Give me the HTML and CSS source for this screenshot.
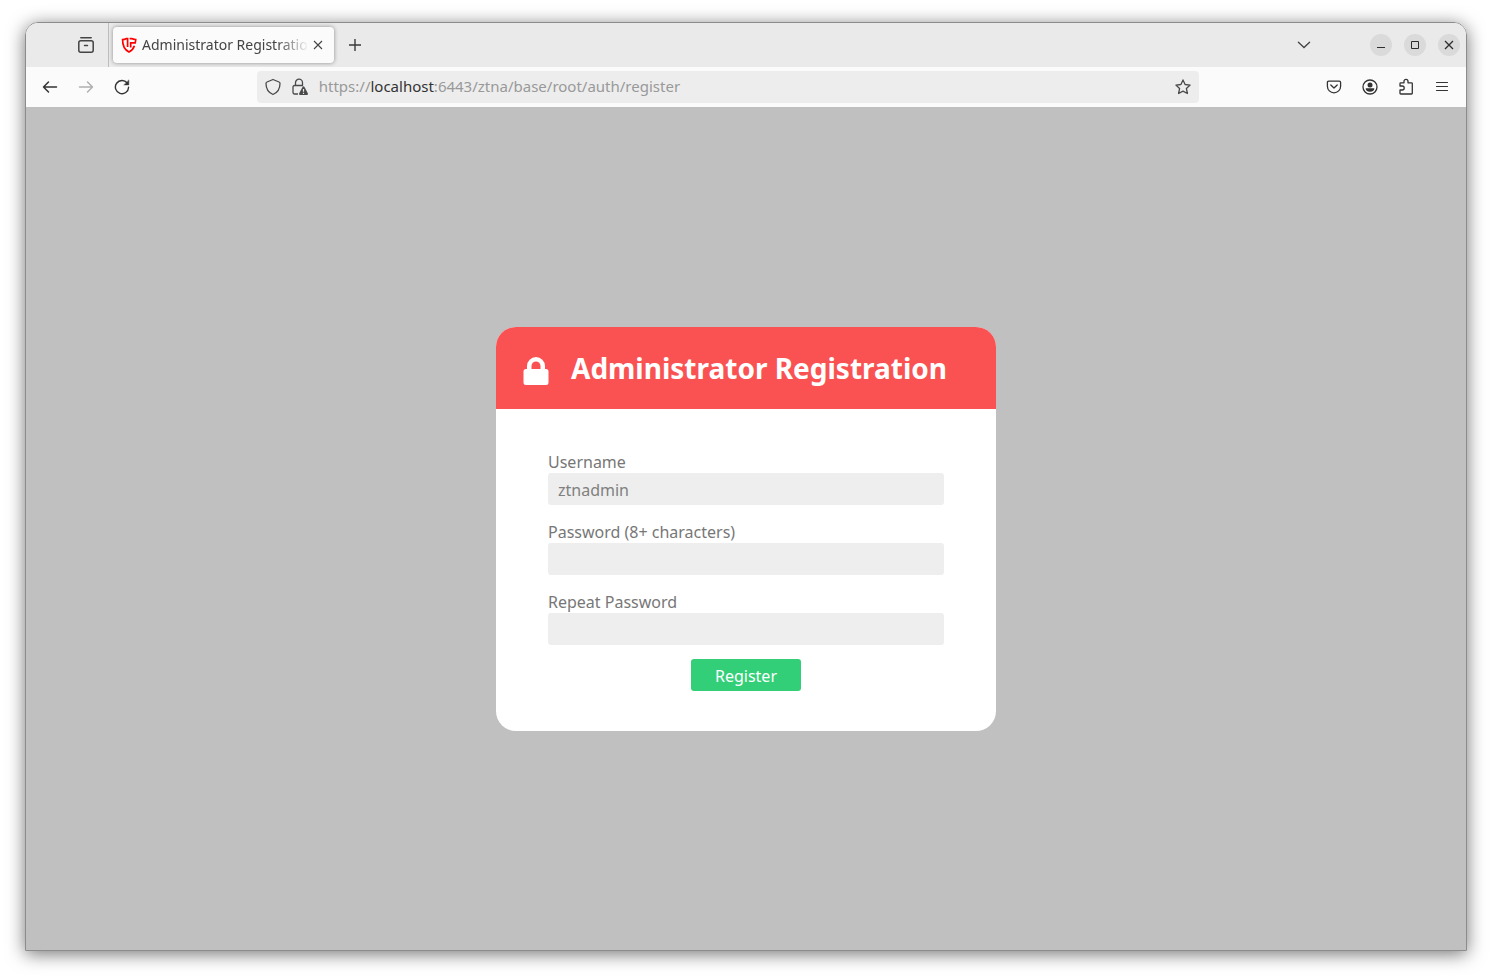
FILE: index.html
```html
<!DOCTYPE html>
<html lang="en">
<head>
  <meta charset="UTF-8" />
  <meta name="viewport" content="width=device-width, initial-scale=1.0" />
  <title>Administrator Registration</title>
  <link rel="stylesheet" href="styles.css">
</head>
<body>
  <div class="window">
    <div class="tab-bar">
      <button type="button" class="icon-btn recent" aria-label="Recent tabs">
        <svg width="18" height="18" viewBox="0 0 18 18" fill="none" stroke="#444" stroke-width="1.5" stroke-linecap="round">
          <path d="M3.8 1.8h10.4" />
          <rect x="1.8" y="4.8" width="14.4" height="11.4" rx="2" />
          <path d="M7.5 9.5h3" />
        </svg>
      </button>
      <div class="tab">
        <svg class="favicon" width="16" height="16" viewBox="0 0 16 16" fill="none" stroke="#f00" stroke-width="1.7">
          <path d="M6.6 10V1.7H5Q3.500 2.500 1.600 2.500C1.500 8 3 12.500 8 15c3-1.500 4.600-3.500 5.400-6.200" />
          <path d="M8.600 1.600h1.800q1.900.9 4.300.9-.1 1.900-.5 3.300H9.700v4.700" />
        </svg>
        <span class="tab-title">Administrator Registration</span>
        <button type="button" class="tab-close" aria-label="Close tab">
          <svg width="10" height="10" viewBox="0 0 10 10" stroke="#444" stroke-width="1.1"><path d="M1 1l8 8M9 1L1 9" /></svg>
        </button>
      </div>
      <button type="button" class="icon-btn" aria-label="New tab">
        <svg width="14" height="14" viewBox="0 0 14 14" stroke="#3a3a3a" stroke-width="1.4"><path d="M7 1v12M1 7h12" /></svg>
      </button>
      <div class="controls">
        <button type="button" class="icon-btn all-tabs" aria-label="List all tabs">
          <svg width="14" height="8" viewBox="0 0 14 8" fill="none" stroke="#444" stroke-width="1.3" stroke-linecap="round"><path d="M1.4 1.2L7 6.5l5.600-5.300" /></svg>
        </button>
        <button type="button" class="round-btn" aria-label="Minimize">
          <svg width="10" height="10" viewBox="0 0 10 10"><path d="M1 7h8v1H1z" fill="#2e2e2e" /></svg>
        </button>
        <button type="button" class="round-btn" aria-label="Maximize">
          <svg width="10" height="10" viewBox="0 0 10 10"><path d="M1.5 1.5h7v7h-7z" fill="none" stroke="#2e2e2e" /></svg>
        </button>
        <button type="button" class="round-btn" aria-label="Close">
          <svg width="10" height="10" viewBox="0 0 10 10"><path d="M1 1l8 8M9 1L1 9" stroke="#2e2e2e" stroke-width="1.3" /></svg>
        </button>
      </div>
    </div>

    <div class="toolbar">
      <button type="button" class="icon-btn" aria-label="Back">
        <svg width="16" height="16" viewBox="0 0 16 16" fill="none" stroke="#333" stroke-width="1.5" stroke-linecap="round" stroke-linejoin="round"><path d="M14.500 8h-13M6.500 3l-5 5 5 5" /></svg>
      </button>
      <button type="button" class="icon-btn" aria-label="Forward" disabled>
        <svg width="16" height="16" viewBox="0 0 16 16" fill="none" stroke="#b0b0b0" stroke-width="1.5" stroke-linecap="round" stroke-linejoin="round"><path d="M1.500 8h13M9.500 3l5 5-5 5" /></svg>
      </button>
      <button type="button" class="icon-btn" aria-label="Reload">
        <svg width="16" height="16" viewBox="0 0 16 16" fill="none" stroke="#333" stroke-width="1.4" stroke-linecap="round">
          <path d="M13.200 4A6.600 6.600 0 1 0 14.600 8.300" />
          <path d="M14.800 1.300v4.600h-4.600z" fill="#333" stroke-width=".5" />
        </svg>
      </button>
      <div class="spring"></div>
      <div class="url-bar">
        <svg width="16" height="18" viewBox="0 0 16 18" fill="none" stroke="#4a4a4a" stroke-width="1.3" stroke-linejoin="round">
          <path d="M8 1.500L14 4q1 .4 1 1.500c0 5-2.200 9-7 11-4.800-2-7-6-7-11Q1 4.400 2 4z" />
        </svg>
        <svg width="16" height="18" viewBox="0 0 16 18">
          <path d="M3.500 7.500V4.700a3.500 3.500 0 0 1 7 0v2.800M6 16H2.500A1.500 1.500 0 0 1 1 14.500V9a1.500 1.500 0 0 1 1.500-1.500h8.500" fill="none" stroke="#4a4a4a" stroke-width="1.3" />
          <path d="M11.500 8.300q.6 0 1 .7l3.300 6.300q.5 1.500-.8 1.700H8q-1.300-.2-.8-1.700L10.500 9q.4-.7 1-.7z" fill="#4a4a4a" />
          <path d="M11.500 11v2.800M11.500 14.800v1.200" stroke="#ededed" stroke-width="1.2" />
        </svg>
        <div class="url" role="textbox" aria-label="Address" contenteditable="true" spellcheck="false">https://<span class="host">localhost</span>:6443/ztna/base/root/auth/register</div>
        <button type="button" class="star" aria-label="Bookmark this page">
          <svg width="16" height="16" viewBox="0 0 16 16" fill="none" stroke="#4a4a4a" stroke-width="1.3" stroke-linejoin="round">
            <path d="M8 .9l2.100 4.600 5 .6-3.700 3.400 1 5L8 12.100l-4.400 2.400 1-5L.9 6.100l5-.6z" />
          </svg>
        </button>
      </div>
      <div class="spring"></div>
      <button type="button" class="icon-btn" aria-label="Save to Pocket">
        <svg width="16" height="16" viewBox="0 0 16 16" fill="none" stroke="#333" stroke-width="1.3" stroke-linecap="round" stroke-linejoin="round">
          <path d="M2.700 2.200h10.600q1.300 0 1.300 1.300v3.700a6.600 6.600 0 0 1-13.200 0V3.500q0-1.300 1.300-1.300z" />
          <path d="M4.800 6L8 9l3.200-3" />
        </svg>
      </button>
      <button type="button" class="icon-btn" aria-label="Account">
        <svg width="16" height="16" viewBox="0 0 16 16">
          <circle cx="8" cy="8" r="7" fill="none" stroke="#333" stroke-width="1.3" />
          <circle cx="8" cy="6" r="2.500" fill="#333" />
          <path d="M3.700 9.300h8.600q.1 3.400-4.300 3.400t-4.300-3.400z" fill="#333" />
        </svg>
      </button>
      <button type="button" class="icon-btn" aria-label="Extensions">
        <svg width="16" height="18" viewBox="0 0 16 18" fill="none" stroke="#333" stroke-width="1.3" stroke-linejoin="round">
          <path d="M2 8V5.600q0-.8.800-.8H6V3.300a2 2 0 0 1 4 0v1.500h3.500q.8 0 .8.800v9.600q0 .8-.8.800H2.800q-.8 0-.8-.8V12h2.200a2 2 0 0 0 0-4z" />
        </svg>
      </button>
      <button type="button" class="icon-btn" aria-label="Menu">
        <svg width="14" height="12" viewBox="0 0 14 12" stroke="#333" stroke-width="1.2" stroke-linecap="round"><path d="M1.500 1.500h11M1.500 5.500h11M1.500 9.500h11" /></svg>
      </button>
    </div>

    <main class="page">
      <div class="card">
        <div class="card-header">
          <svg width="26" height="28" viewBox="0 0 26 28" fill="#fff">
            <path d="M4 12V9a9 9 0 0 1 18 0v3h1a2.500 2.500 0 0 1 2.500 2.500v11A2.500 2.500 0 0 1 23 28H3A2.500 2.500 0 0 1 .5 25.500v-11A2.500 2.500 0 0 1 3 12zm4.500 0h9V9a4.500 4.500 0 0 0-9 0z" />
          </svg>
          <h1>Administrator Registration</h1>
        </div>
        <form id="regForm">
          <label for="username">Username</label>
          <input type="text" id="username" placeholder="ztnadmin" />
          <label for="password">Password (8+ characters)</label>
          <input type="password" id="password" />
          <label for="repeatPassword">Repeat Password</label>
          <input type="password" id="repeatPassword" />
          <button type="submit" class="register">Register</button>
        </form>
      </div>
    </main>
  </div>
</body>
</html>
```

FILE: styles.css
```css
* {
  box-sizing: border-box;
}

body {
  margin: 0;
  padding: 22px 25px 28px;
  min-height: 100vh;
  display: flex;
  background-color: white;
  font-family: 'Noto Sans', sans-serif;
  font-size: 16px;
}

button {
  display: flex;
  align-items: center;
  justify-content: center;
  padding: 0;
  border: none;
  background: none;
  font-family: inherit;
  cursor: pointer;
}

svg {
  flex-shrink: 0;
}

/* Browser window */
.window {
  flex: 1;
  display: flex;
  flex-direction: column;
  min-width: 0;
  border: 1px solid #8c8c8c;
  border-radius: 13px 13px 0 0;
  overflow: hidden;
  box-shadow: 0 3px 18px rgba(0, 0, 0, 0.55);
}

.tab-bar {
  display: flex;
  align-items: center;
  height: 44px;
  background-color: #eaeaea;
}

.icon-btn {
  width: 36px;
  height: 36px;
  flex-shrink: 0;
}

.recent {
  width: 83px;
  height: 44px;
  padding-left: 38px;
  border-right: 1px solid #bdbdbd;
}

.tab {
  display: flex;
  align-items: center;
  width: 221px;
  height: 36px;
  margin: 0 3px 0 4px;
  padding: 0 7px 0 8px;
  border-radius: 4px;
  background-color: #fbfbfb;
  box-shadow: 0 0 4px rgba(0, 0, 0, 0.4);
}

.tab-title {
  flex: 1;
  min-width: 0;
  margin-left: 5px;
  padding-bottom: 2px;
  overflow: hidden;
  white-space: nowrap;
  font-size: 14px;
  color: #444;
  mask-image: linear-gradient(to left, transparent, black 32px);
}

.tab-close {
  width: 18px;
  height: 20px;
}

.controls {
  display: flex;
  align-items: center;
  gap: 12px;
  margin-left: auto;
  padding-right: 6px;
}

.all-tabs {
  margin-right: 36px;
}

.round-btn {
  width: 22px;
  height: 22px;
  border-radius: 50%;
  background-color: #dadada;
}

.toolbar {
  display: flex;
  align-items: center;
  height: 40px;
  padding: 0 6px;
  background-color: #fbfbfb;
}

.spring {
  flex: 1;
}

.url-bar {
  display: flex;
  align-items: center;
  gap: 11px;
  width: 66%;
  height: 32px;
  padding: 0 8px;
  border-radius: 4px;
  background-color: #ededed;
}

.url {
  flex: 1;
  min-width: 0;
  padding-bottom: 2px;
  overflow: hidden;
  white-space: nowrap;
  font-size: 15px;
  color: #999;
  outline: none;
}

.host {
  color: #333;
}

/* Registration page */
.page {
  flex: 1;
  display: flex;
  justify-content: center;
  align-items: center;
  background-color: #c0c0c0;
}

.card {
  width: 100%;
  max-width: 500px;
  border-radius: 20px;
  overflow: hidden;
  background-color: white;
}

.card-header {
  display: flex;
  align-items: center;
  gap: 22px;
  padding: 22px 27px;
  background-color: #fa5252;
  color: white;
}

.card-header svg {
  margin-top: 6px;
}

h1 {
  margin: 0;
  font-size: 28px;
  line-height: 38px;
}

form {
  display: flex;
  flex-direction: column;
  padding: 42px 52px 40px;
}

label {
  line-height: 22px;
  color: #777;
}

input {
  width: 100%;
  height: 32px;
  margin-bottom: 16px;
  padding: 2px 10px 0;
  border: none;
  border-radius: 3px;
  background-color: #eee;
  font-family: inherit;
  font-size: 16px;
  color: #777;
}

input::placeholder {
  color: #808080;
}

input:focus {
  outline: none;
}

.register {
  align-self: center;
  width: 110px;
  height: 32px;
  margin-top: -2px;
  padding-top: 2px;
  border-radius: 3px;
  background-color: #33cf78;
  font-size: 16px;
  color: white;
}

.register:hover {
  background-color: #2dbb6b;
}
```
